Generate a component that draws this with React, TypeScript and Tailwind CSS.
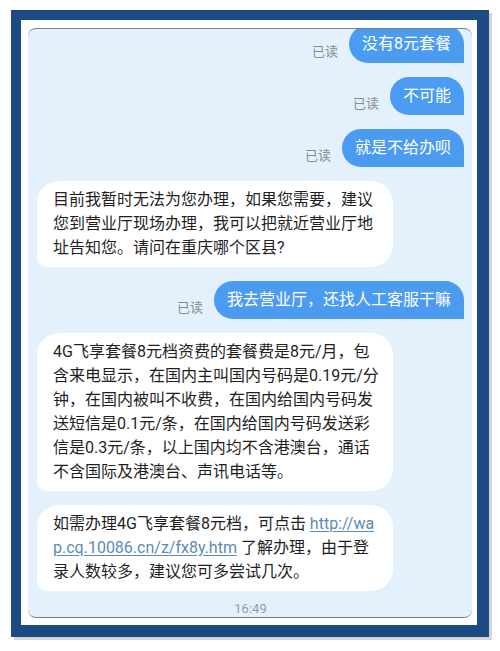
import React from 'react';

const FONT = { fontFamily: 'Roboto, "Noto Sans CJK SC", "Noto Sans", sans-serif' };

const Read = () => (
    <span className="text-[13px] leading-[16px] text-[#8a8a8a] pb-[3px] mr-[11px]">已读</span>
);

const Mine: React.FC<{ text: string }> = ({ text }) => (
    <div className="flex items-end justify-end">
        <Read />
        <div className="bg-[#4b9bf1] text-white text-[16px] leading-[24px] px-[13px] py-[7px] rounded-[19px] rounded-br-none whitespace-nowrap">
            {text}
        </div>
    </div>
);

const Theirs: React.FC<{ children: React.ReactNode }> = ({ children }) => (
    <div className="flex justify-start">
        <div className="w-[356px] bg-white text-[#1f1f1f] text-[16px] leading-[24px] pl-[16px] pr-[18px] py-[7px] rounded-[22px] rounded-bl-[10px]">
            {children}
        </div>
    </div>
);

const Line: React.FC<{ children: React.ReactNode }> = ({ children }) => (
    <span className="block whitespace-nowrap">{children}</span>
);

const Link: React.FC<{ children: React.ReactNode }> = ({ children }) => (
    <span className="text-[#5a8bb8] underline underline-offset-2">{children}</span>
);

export default function App() {
    return (
        <div className="w-[500px] h-[651px] bg-white pt-[10px] pl-[11px]" style={FONT}>
            <div className="w-[478px] h-[627px] bg-white border-[#1e4a83] border-l-[10px] border-t-[10px] border-r-[12px] border-b-[12px] pl-[7px] pt-[8px] pr-[5px] pb-[7px] shadow-[3px_3px_0_#d4d4d4]">
                <div className="h-full bg-[#e2f1fc] rounded-[8px] border-y border-[#7a7f86] overflow-hidden pl-[9px] pr-[8px]">
                    <div className="flex flex-col gap-[14px] -mt-[4px]">
                        <Mine text="没有8元套餐" />
                        <Mine text="不可能" />
                        <Mine text="就是不给办呗" />
                        <Theirs>
                            <Line>目前我暂时无法为您办理，如果您需要，建议</Line>
                            <Line>您到营业厅现场办理，我可以把就近营业厅地</Line>
                            <Line>址告知您。请问在重庆哪个区县?</Line>
                        </Theirs>
                        <Mine text="我去营业厅，还找人工客服干嘛" />
                        <Theirs>
                            <Line>4G飞享套餐8元档资费的套餐费是8元/月，包</Line>
                            <Line>含来电显示，在国内主叫国内号码是0.19元/分</Line>
                            <Line>钟，在国内被叫不收费，在国内给国内号码发</Line>
                            <Line>送短信是0.1元/条，在国内给国内号码发送彩</Line>
                            <Line>信是0.3元/条，以上国内均不含港澳台，通话</Line>
                            <Line>不含国际及港澳台、声讯电话等。</Line>
                        </Theirs>
                        <Theirs>
                            <Line>如需办理4G飞享套餐8元档，可点击 <Link>http://wa</Link></Line>
                            <Line><Link>p.cq.10086.cn/z/fx8y.htm</Link> 了解办理，由于登</Line>
                            <Line>录人数较多，建议您可多尝试几次。</Line>
                        </Theirs>
                        <div className="-mt-[3px] text-center text-[13px] leading-[13px] text-[#9a9a9a]">16:49</div>
                    </div>
                </div>
            </div>
        </div>
    );
}
